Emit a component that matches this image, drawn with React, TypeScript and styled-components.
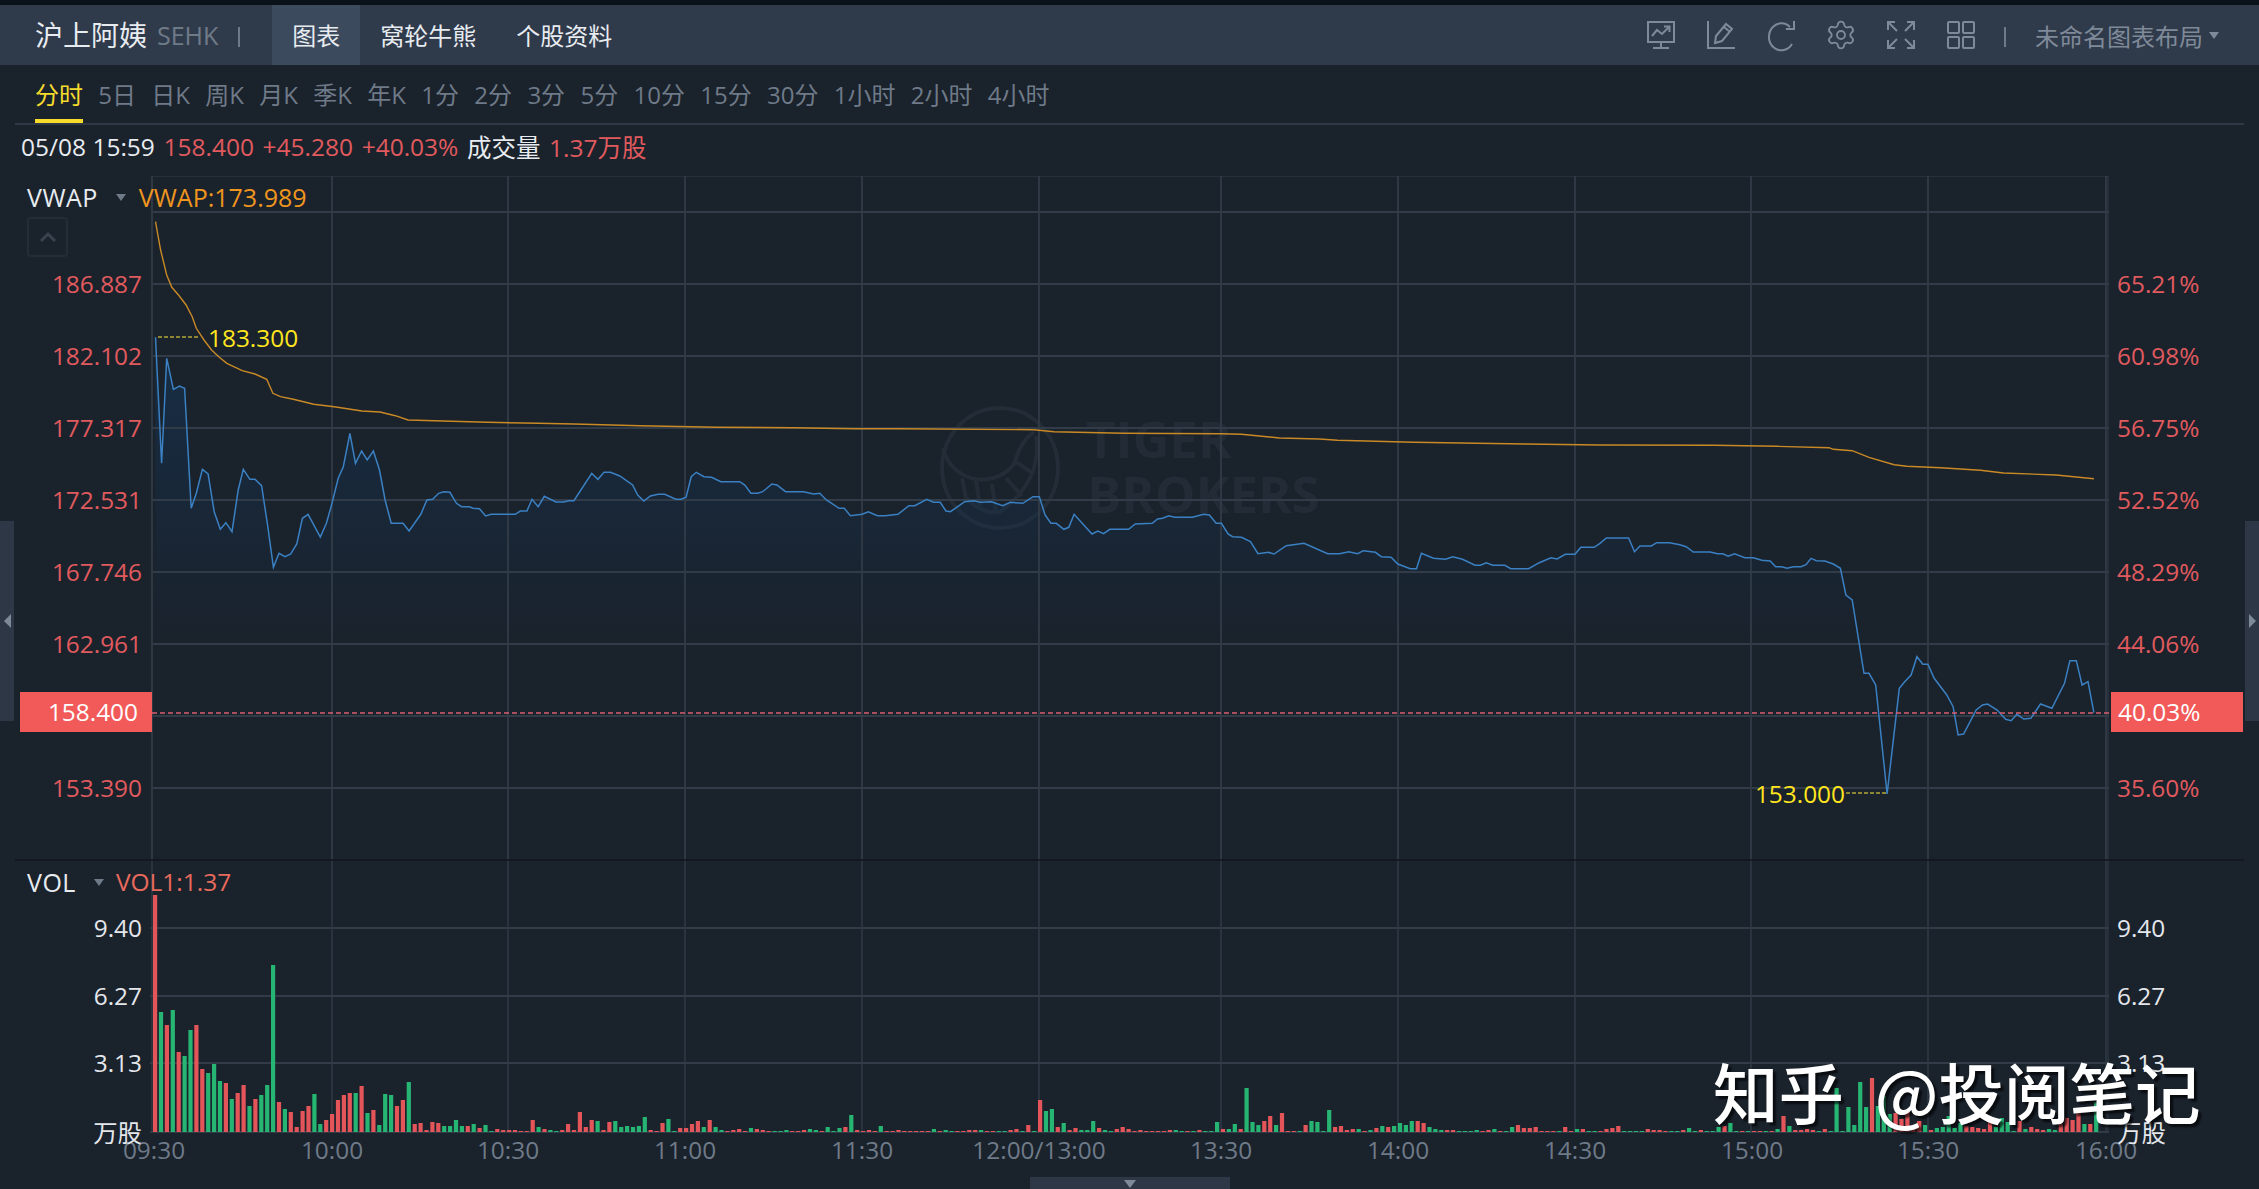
import React from "react";
import styled, { createGlobalStyle } from "styled-components";
import { Settings } from "lucide-react";

const FONT = `"Open Sans", "Noto Sans CJK SC", sans-serif`;
const GREY = "#6f7a88";
const ICON = "#7f8a99";
const RED = "#e05a5e";

const GlobalStyle = createGlobalStyle`
  html, body { margin: 0; padding: 0; background: #1a222c; }
  body { font-family: ${FONT}; }
`;

const Page = styled.div`
  width: 2259px;
  height: 1189px;
  display: flex;
  flex-direction: column;
  overflow: hidden;
  background: #1a222c;
  font-size: 24px;
  color: #e8ecf0;
`;
const TopStrip = styled.div`
  height: 5px;
  flex: none;
  background: #0b1118;
`;
const Toolbar = styled.header`
  height: 60px;
  flex: none;
  display: flex;
  align-items: center;
  padding: 0 40px 0 35px;
  background: #2f3a4b;
`;
const Title = styled.span`
  font-size: 28px;
  line-height: 62px;
`;
const Exchange = styled.span`
  margin-left: 10px;
  font-size: 25px;
  line-height: 65px;
  color: ${GREY};
`;
const Divider = styled.span<{ $left: number; $right: number }>`
  width: 2px;
  height: 20px;
  margin: 3px ${(p) => p.$right}px 0 ${(p) => p.$left}px;
  background: ${GREY};
`;
const Tab = styled.div<{ $active?: boolean }>`
  height: 60px;
  line-height: 61px;
  padding: 0 20px;
  background: ${(p) => (p.$active ? "#3c4a5e" : "transparent")};
`;
const ToolGroup = styled.div`
  margin-left: auto;
  display: flex;
  align-items: center;
  gap: 32px;
`;
const ToolIcon = styled.svg`
  width: 28px;
  height: 28px;
  display: block;
  fill: none;
  stroke: ${ICON};
  stroke-width: 2;
  overflow: visible;
`;
const LayoutName = styled.span`
  color: ${ICON};
`;
const TinyCaret = styled.span<{ $color: string; $left: number; $right: number }>`
  width: 0;
  height: 0;
  flex: none;
  margin: 0 ${(p) => p.$right}px 0 ${(p) => p.$left}px;
  border-left: 5px solid transparent;
  border-right: 5px solid transparent;
  border-top: 7px solid ${(p) => p.$color};
`;
const PeriodBar = styled.nav`
  height: 58px;
  flex: none;
  margin: 0 15px;
  padding: 0 0 0 20px;
  display: flex;
  align-items: flex-start;
  gap: 15.3px;
  border-bottom: 2px solid #2f3844;
`;
const Period = styled.span<{ $active?: boolean }>`
  height: 54px;
  line-height: 60px;
  white-space: nowrap;
  color: ${(p) => (p.$active ? "#f7dc2c" : GREY)};
  border-bottom: 4px solid ${(p) => (p.$active ? "#f7dc2c" : "transparent")};
`;
const InfoRow = styled.div`
  height: 51px;
  flex: none;
  padding: 0 0 8px 21px;
  display: flex;
  align-items: center;
  gap: 8.6px;
  font-size: 24.5px;
  box-sizing: border-box;
`;
const Info = styled.span<{ $red?: boolean }>`
  white-space: nowrap;
  color: ${(p) => (p.$red ? RED : "#e8ecf0")};
`;
const ChartFrame = styled.div`
  position: relative;
  flex: 1;
  min-height: 0;
`;
const ChartSvg = styled.svg`
  display: block;
  width: 2259px;
  height: 1013px;
`;
const AxisText = styled.text<{ $fill: string }>`
  font-family: ${FONT};
  font-size: 24.4px;
  fill: ${(p) => p.$fill};
  dominant-baseline: central;
  transform: translateY(-1px);
`;
const BrandText = styled.text`
  font-family: ${FONT};
  font-size: 51px;
  font-weight: 700;
  fill: #222b36;
`;
const Legend = styled.div<{ $top: number }>`
  position: absolute;
  left: 27px;
  top: ${(p) => p.$top}px;
  height: 32px;
  line-height: 32px;
  font-size: 25px;
  display: flex;
  align-items: center;
  white-space: nowrap;
`;
const LegendLabel = styled.span`
  letter-spacing: 0.5px;
`;
const LegendValue = styled.span<{ $color: string }>`
  color: ${(p) => p.$color};
`;
const VolumeValue = styled(LegendValue)`
  font-size: 24.5px;
`;
const CollapseButton = styled.div`
  position: absolute;
  left: 27px;
  top: 41px;
  width: 41px;
  height: 40px;
  box-sizing: border-box;
  border: 2px solid #232c37;
  border-radius: 4px;
  display: flex;
  align-items: center;
  justify-content: center;
`;
const PriceTag = styled.div<{ $side: "left" | "right" }>`
  position: absolute;
  top: 516px;
  width: 132px;
  height: 40px;
  box-sizing: border-box;
  line-height: 39px;
  font-size: 24.4px;
  color: #fff;
  background: #f25a5a;
  ${(p) =>
    p.$side === "left"
      ? "left: 20px; text-align: right; padding-right: 14px;"
      : "left: 2111px; text-align: left; padding-left: 7px;"}
`;
const SideHandle = styled.div<{ $side: "left" | "right" }>`
  position: absolute;
  top: 345px;
  width: 14px;
  height: 200px;
  background: #2d3745;
  display: flex;
  align-items: center;
  justify-content: center;
  ${(p) => (p.$side === "left" ? "left: 0;" : "right: 0;")}
`;
const HandleArrow = styled.span<{ $side: "left" | "right" }>`
  width: 0;
  height: 0;
  border-top: 7px solid transparent;
  border-bottom: 7px solid transparent;
  ${(p) =>
    p.$side === "left"
      ? `border-right: 7px solid ${ICON};`
      : `border-left: 7px solid ${ICON};`}
`;
const BottomHandle = styled.div`
  position: absolute;
  left: 1030px;
  bottom: 0;
  width: 200px;
  height: 12px;
  background: #2d3745;
  display: flex;
  justify-content: center;
  padding-top: 3px;
  box-sizing: border-box;
`;
const BottomArrow = styled.span`
  width: 0;
  height: 0;
  border-left: 6px solid transparent;
  border-right: 6px solid transparent;
  border-top: 8px solid ${ICON};
`;
const SiteMark = styled.div`
  position: absolute;
  left: 1713px;
  top: 873px;
  font-size: 65.5px;
  line-height: 84px;
  word-spacing: 16px;
  font-weight: 500;
  font-family: "Noto Sans CJK SC", sans-serif;
  color: #fff;
  white-space: nowrap;
  text-shadow: 3px 3px 2px rgba(0, 0, 0, 0.65);
`;

type P = [number, number];
const mapPts = (pts: number[], ox: number, fx: number, oy: number): P[] => {
  const out: P[] = [];
  for (let i = 0; i < pts.length; i += 2) out.push([ox + pts[i] / fx, oy + pts[i + 1] / 3]);
  return out;
};
const price: P[] = [
  ...mapPts(
    [50,412,62,790,72,475,85,568,97,558,107,565,120,925,130,880,142,808,153,822,165,935,177,988,188,968,200,995,212,870,222,808,235,838,245,838,258,857,270,980,281,1102,292,1060,304,1070,315,1062,327,1032,338,955,349,943,373,1011,385,970,396,910,408,835,418,800,431,700,442,790,454,753,465,780,477,753,489,810,500,900,512,970,535,970,547,993,570,943,582,900,593,898,605,880,615,875,627,877,640,910,650,920,665,920,672,925,685,926,697,948,708,943,755,943,765,933,778,933,788,898,800,920,812,889,835,906,850,906,860,902,870,902,905,820,917,838,929,817,942,817,960,828,985,855,995,885,1007,903,1020,888,1035,883,1048,883,1070,898,1080,898,1090,892,1100,830,1110,817,1125,830,1140,832,1158,845,1195,845,1205,855,1217,880,1230,880,1240,875,1258,852,1268,855,1285,875,1320,875,1340,882,1352,880,1365,900,1390,925,1400,925,1412,947,1435,943,1447,935,1465,947,1480,947,1505,943],
    130, 1.96, 200),
  ...mapPts(
    [20,377,33,377,60,358,75,367,90,367,103,393,113,395,145,365,165,362,180,367,205,365,230,377,247,367,275,370,298,350,312,350,325,405,338,430,350,430,367,448,378,442,390,403,430,462,443,453,456,461,470,448,512,448,527,432,565,430,577,417,588,415,602,407,615,412,655,412,680,403,693,405,708,430,720,430,735,462,745,470,765,472,785,485,802,521,825,517,838,522,865,497,905,490,958,521,985,521,1005,515,1025,521,1038,512,1065,517,1078,530,1100,532,1115,552,1143,566,1157,566,1168,520,1195,535,1222,538,1238,530,1260,538,1288,556,1300,556,1313,548,1328,556,1355,556,1368,566,1408,566,1432,548,1458,533,1472,537,1490,523,1512,523,1525,502,1555,502],
    900, 2.24, 380),
  ...mapPts(
    [0,430,15,414,68,414,82,455,95,438,122,438,135,428,165,428,190,434,205,440,222,456,262,456,280,461,292,461,305,469,320,461,345,473,365,473,385,481,405,483,418,500,432,500,445,505,460,500,478,500,490,494,502,475,515,482,535,483,555,492,572,505,585,585,600,600,628,820,640,820,656,855,683,1182,712,865,725,845,740,825,754,770,768,793,780,793,795,835,825,885,840,920,852,1005,865,1002,895,930,910,915,922,912,945,930,965,958,978,962,992,943,1008,957,1025,955,1048,912,1075,925,1105,850,1118,782,1133,782,1147,855,1161,845,1175,938],
    1600, 2.379, 400),
];
const vwap: P[] = [
  ...mapPts(
    [50,65,60,150,72,225,82,262,95,285,110,315,122,350,130,385,145,420,160,450,175,472,190,490,220,512,245,522,268,538,280,580,295,590,320,598,340,605,360,613,400,620,455,633,490,636,520,647,545,660,700,667,800,670,870,672,1000,677,1150,682,1300,683,1420,686],
    130, 1.96, 200),
  ...mapPts([0,146,300,149,345,155,500,160,720,161,765,163,850,174,940,177,980,181,1150,187,1400,192,1568,195], 900, 2.24, 380),
  ...mapPts([270,136,420,139,545,143,555,148,600,152,640,172,700,194,730,199,810,203,905,211,960,219,1085,225,1175,236], 1600, 2.379, 400),
];
const toLine = (pts: P[]) => pts.map(([x, y]) => `${x.toFixed(1)},${y.toFixed(1)}`).join(" ");
const areaBase = 860;
const areaPts = `${price[0][0].toFixed(1)},${areaBase} ${toLine(price)} ${price[price.length - 1][0].toFixed(1)},${areaBase}`;

// positive = up (red), negative = down (green), height in pixels
const vols: number[] = [
  237,-120,107,-122,80,-76,-102,107,63,-59,-68,-51,49,-33,39,47,-26,33,-37,-47,-167,30,-23,20,5,21,26,-38,-8,12,18,32,37,39,-39,46,-19,22,-7,-38,-37,26,32,-50,
  8,9,2,10,9,-6,-6,-12,-6,6,-8,4,-7,-1,3,2,2,2,1,1,
  12,-5,3,-2,-1,2,8,2,20,5,12,-11,2,10,-11,-5,-6,-5,-6,-15,2,1,9,-13,-1,4,4,8,11,-5,12,-5,-2,1,2,3,1,-4,3,2,1,-1,-1,-2,1,1,2,-3,-2,1,-5,-1,-4,5,-17,2,1,2,1,-6,1,1,2,1,1,1,1,1,-3,1,-2,
  -1,1,1,2,2,-2,1,1,-1,-1,2,3,-1,7,-1,32,-21,-23,5,-9,2,4,-2,-2,-11,4,-2,-1,3,5,3,1,2,1,1,1,1,2,-2,-1,1,-1,2,-1,-1,-10,3,-3,-8,3,-44,-10,-7,11,16,-7,19,1,1,-1,7,-11,-10,-1,-22,5,6,2,3,-3,
  1,-2,4,-6,5,-6,-9,-7,-11,11,9,-5,-3,-2,2,2,-1,-1,-1,-2,1,2,-3,1,-1,-5,7,4,4,5,1,1,1,-1,5,1,-3,3,-1,-1,1,3,4,6,-1,-1,-1,-1,3,2,2,1,-1,-1,2,-4,-1,2,-1,-1,-5,6,-9,-1,1,-1,1,1,-1,1,-3,16,-6,
  2,2,3,2,-1,3,-1,-44,-1,-25,-7,-50,-25,54,-26,-36,-18,19,13,20,5,11,-7,2,-4,-5,-16,-4,-9,6,5,4,3,12,-5,-14,-10,-1,11,-3,5,3,2,-3,-2,8,14,12,22,-8,8,-30,
];

const hLines = [212, 284, 356, 428, 500, 572, 644, 716, 788];
const vLines = [152, 332, 508, 685, 862, 1039, 1221, 1398, 1575, 1751, 1928, 2106];
const volLines = [928, 996, 1063];
const leftLabels: [number, string][] = [
  [284, "186.887"], [356, "182.102"], [428, "177.317"], [500, "172.531"], [572, "167.746"], [644, "162.961"], [788, "153.390"],
];
const rightLabels: [number, string][] = [
  [284, "65.21%"], [356, "60.98%"], [428, "56.75%"], [500, "52.52%"], [572, "48.29%"], [644, "44.06%"], [788, "35.60%"],
];
const volLabels: [number, string][] = [[928, "9.40"], [996, "6.27"], [1063, "3.13"], [1133, "万股"]];
const times: [number, string][] = [
  [154, "09:30"], [332, "10:00"], [508, "10:30"], [685, "11:00"], [862, "11:30"], [1039, "12:00/13:00"],
  [1221, "13:30"], [1398, "14:00"], [1575, "14:30"], [1752, "15:00"], [1928, "15:30"], [2106, "16:00"],
];
const periods = ["分时", "5日", "日K", "周K", "月K", "季K", "年K", "1分", "2分", "3分", "5分", "10分", "15分", "30分", "1小时", "2小时", "4小时"];

const TigerLogo = () => (
  <g fill="none" stroke="#232c37" strokeWidth="4">
    <ellipse cx="1000" cy="468" rx="58" ry="60" />
    <path d="M1034 432 C1022 440 1018 452 1014 464 C1004 478 982 484 966 476 C952 470 946 460 943 448" />
    <path d="M1036 436 C1040 462 1030 484 1014 500 L1000 512 C988 514 976 508 966 498 L962 478" />
    <path d="M976 480 L980 506 M992 484 L996 512 M1006 478 L1022 496 M1016 462 L1034 474" />
  </g>
);

export default function App() {
  return (
    <Page>
      <GlobalStyle />
      <TopStrip />
      <Toolbar>
        <Title>沪上阿姨</Title>
        <Exchange>SEHK</Exchange>
        <Divider $left={20} $right={32} />
        <Tab $active>图表</Tab>
        <Tab>窝轮牛熊</Tab>
        <Tab>个股资料</Tab>
        <ToolGroup>
          <ToolIcon viewBox="0 0 28 28">
            <rect x="1" y="1" width="26" height="20" />
            <path d="M5 15 L10 9 L15 13 L22 6 M17 5.5 H22.5 V11" />
            <path d="M14 21 V27 M6 27 H22" />
          </ToolIcon>
          <ToolIcon viewBox="0 0 28 28">
            <path d="M1 0 V27 H28" />
            <path d="M8 22 L9 15 L19 3 L25 8 L15 20 Z M17 6 L22.5 10.5" />
          </ToolIcon>
          <ToolIcon viewBox="0 0 28 28">
            <path d="M23 6 A12.5 13.5 0 1 0 25 23" />
            <path d="M27 0 V8 H19" />
          </ToolIcon>
          <Settings size={32} strokeWidth={1.4} color={ICON} style={{ margin: "0 -2px" }} />
          <ToolIcon viewBox="0 0 28 28">
            <path d="M1 9 V1 H8 M1 1 L10 10 M20 1 H27 V9 M27 1 L18 10 M1 19 V27 H8 M1 27 L10 18 M20 27 H27 V19 M27 27 L18 18" />
          </ToolIcon>
          <ToolIcon viewBox="0 0 28 28">
            <rect x="1" y="1" width="11" height="11" rx="1" />
            <rect x="16" y="1" width="11" height="11" rx="1" />
            <rect x="1" y="16" width="11" height="11" rx="1" />
            <rect x="16" y="16" width="11" height="11" rx="1" />
          </ToolIcon>
        </ToolGroup>
        <Divider $left={29} $right={29} />
        <LayoutName>未命名图表布局</LayoutName>
        <TinyCaret $color={ICON} $left={6} $right={0} />
      </Toolbar>
      <PeriodBar>
        {periods.map((p, i) => (
          <Period key={p} $active={i === 0}>{p}</Period>
        ))}
      </PeriodBar>
      <InfoRow>
        <Info>05/08 15:59</Info>
        <Info $red>158.400</Info>
        <Info $red>+45.280</Info>
        <Info $red>+40.03%</Info>
        <Info>成交量</Info>
        <Info $red>1.37万股</Info>
      </InfoRow>
      <ChartFrame>
        <ChartSvg viewBox="0 176 2259 1013">
          <defs>
            <linearGradient id="priceArea" gradientUnits="userSpaceOnUse" x1="0" y1="340" x2="0" y2="640">
              <stop offset="0" stopColor="#14365a" stopOpacity="0.55" />
              <stop offset="1" stopColor="#14365a" stopOpacity="0" />
            </linearGradient>
          </defs>
          <TigerLogo />
          <BrandText x="1086" y="458">TIGER</BrandText>
          <BrandText x="1087" y="513">BROKERS</BrandText>
          <polygon points={areaPts} fill="url(#priceArea)" />
          <g stroke="#323c48" strokeWidth="1.8">
            <line x1="152" y1="176" x2="2109" y2="176" strokeWidth="1" />
            {hLines.map((y) => <line key={y} x1="152" y1={y} x2="2109" y2={y} />)}
            {volLines.map((y) => <line key={y} x1="150" y1={y} x2="2109" y2={y} />)}
            <line x1="150" y1="1132" x2="2109" y2="1132" />
            {vLines.map((x) => <line key={x} x1={x} y1="176" x2={x} y2="860" />)}
            {vLines.map((x) => <line key={x} x1={x} y1="860" x2={x} y2="1132" strokeWidth="1.4" />)}
            <line x1="2108" y1="176" x2="2108" y2="1132" strokeWidth="1" />
          </g>
          <line x1="15" y1="860" x2="2244" y2="860" stroke="#10151c" strokeWidth="1.5" />
          <polyline points={toLine(vwap)} fill="none" stroke="#c98a26" strokeWidth="1.4" />
          <polyline points={toLine(price)} fill="none" stroke="#3a80c2" strokeWidth="1.5" />
          <line x1="152" y1="713" x2="2109" y2="713" stroke="#d95f6e" strokeWidth="1.3" strokeDasharray="5 3" />
          <line x1="158" y1="337" x2="198" y2="337" stroke="#ffeb3b" strokeWidth="1" strokeDasharray="4 2" />
          <line x1="1846" y1="793" x2="1887" y2="793" stroke="#ffeb3b" strokeWidth="1" strokeDasharray="4 2" />
          <AxisText $fill="#ffe61e" x="208" y="338">183.300</AxisText>
          <AxisText $fill="#ffe61e" x="1845" y="794" textAnchor="end">153.000</AxisText>
          {vols.map((v, i) => {
            const h = Math.max(Math.abs(v), 1);
            return (
              <rect
                key={i}
                x={153 + i * 5.9}
                y={1132 - h}
                width="4.2"
                height={h}
                fill={v > 0 ? "#e4555a" : "#27b573"}
              />
            );
          })}
          {leftLabels.map(([y, t]) => <AxisText key={t} $fill={RED} x="142" y={y} textAnchor="end">{t}</AxisText>)}
          {rightLabels.map(([y, t]) => <AxisText key={t} $fill={RED} x="2117" y={y}>{t}</AxisText>)}
          {times.map(([x, t]) => <AxisText key={t} $fill={GREY} x={x} y="1150" textAnchor="middle">{t}</AxisText>)}
          {volLabels.map(([y, t]) => <AxisText key={t} $fill="#e4e7eb" x="142" y={y} textAnchor="end">{t}</AxisText>)}
          {volLabels.map(([y, t]) => <AxisText key={t} $fill="#e4e7eb" x="2117" y={y}>{t}</AxisText>)}
        </ChartSvg>
        <Legend $top={5}>
          <LegendLabel>VWAP</LegendLabel>
          <TinyCaret $color={GREY} $left={18} $right={13} />
          <LegendValue $color="#f0961e">VWAP:173.989</LegendValue>
        </Legend>
        <CollapseButton>
          <svg width="18" height="12" viewBox="0 0 18 12" fill="none" stroke="#39434f" strokeWidth="3">
            <path d="M2 10 L9 3 L16 10" />
          </svg>
        </CollapseButton>
        <Legend $top={690}>
          <LegendLabel>VOL</LegendLabel>
          <TinyCaret $color={GREY} $left={18} $right={12} />
          <VolumeValue $color="#e86a5c">VOL1:1.37</VolumeValue>
        </Legend>
        <PriceTag $side="left">158.400</PriceTag>
        <PriceTag $side="right">40.03%</PriceTag>
        <SideHandle $side="left"><HandleArrow $side="left" /></SideHandle>
        <SideHandle $side="right"><HandleArrow $side="right" /></SideHandle>
        <BottomHandle><BottomArrow /></BottomHandle>
        <SiteMark>知乎 @投阅笔记</SiteMark>
      </ChartFrame>
    </Page>
  );
}
